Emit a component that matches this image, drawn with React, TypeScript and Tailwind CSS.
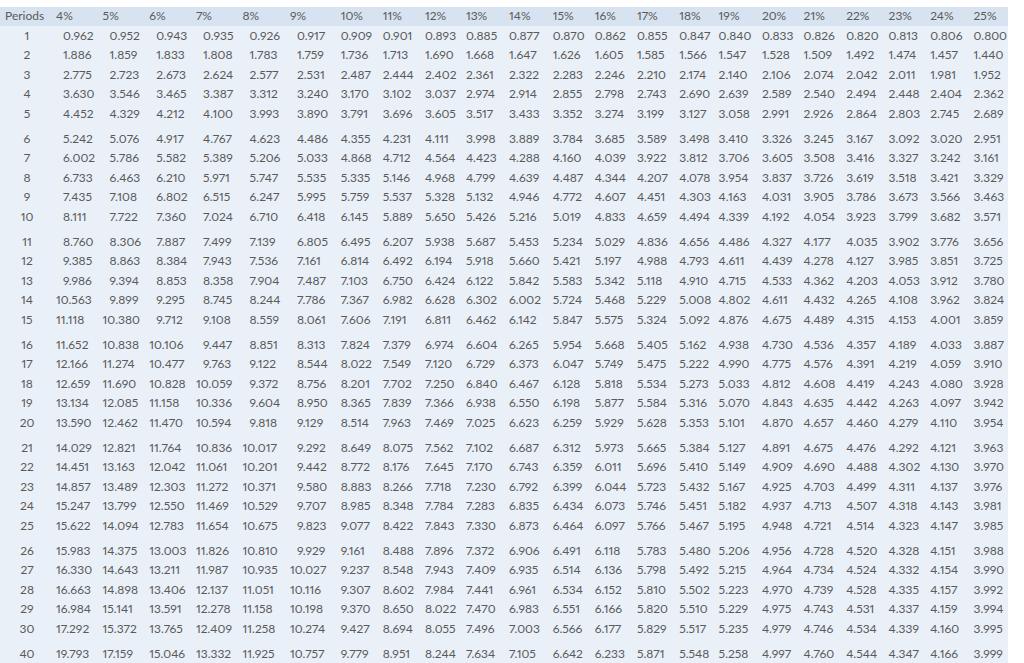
import React from 'react'

// present value of an ordinary annuity, 3 decimals
const rates = Array.from({ length: 22 }, (_, i) => i + 4)
const groups = [
  [1, 2, 3, 4, 5],
  [6, 7, 8, 9, 10],
  [11, 12, 13, 14, 15],
  [16, 17, 18, 19, 20],
  [21, 22, 23, 24, 25],
  [26, 27, 28, 29, 30],
  [40],
]

const pva = (rate: number, n: number) => {
  const r = rate / 100
  return ((1 - Math.pow(1 + r, -n)) / r).toFixed(3)
}

const rowGrid =
  'grid grid-cols-[56px_46.6px_46.7px_46.7px_46.6px_47.4px_50.7px_42px_42.3px_41px_43px_43.7px_42px_42.3px_42.3px_39.4px_43.3px_41.7px_42.6px_42.4px_41.6px_43.4px_1fr] h-[19.5px] items-center'

const Cell = ({ rate, n }: { rate: number; n: number }) => {
  const v = pva(rate, n)
  // columns up to 9% hold two-digit values, single-digit ones sit one figure in
  const shift = rate <= 9 && v.length === 5
  return <div className={shift ? 'pl-[7px] whitespace-nowrap' : 'whitespace-nowrap'}>{v}</div>
}

const App = () => {
  return (
    <div className="w-[1024px] h-[663px] bg-white pt-[6.5px] font-['Lato','Liberation_Sans',sans-serif] text-[12px] leading-none text-[#5a5a5a] proportional-nums">
      <div className="w-[1008px] bg-[#e9f0f8] pb-[1px]">
        <div className={rowGrid + ' bg-[#d8e3f1]'}>
          <div className="pl-[5px]">Periods</div>
          {rates.map((r) => (
            <div key={r}>{r}%</div>
          ))}
        </div>
        {groups.map((g, gi) => (
          <div key={gi} className={gi === 0 ? '' : 'mt-[5.5px]'}>
            {g.map((n) => (
              <div key={n} className={rowGrid}>
                <div className="text-center pr-[2px]">{n}</div>
                {rates.map((r) => (
                  <Cell key={r} rate={r} n={n} />
                ))}
              </div>
            ))}
          </div>
        ))}
      </div>
    </div>
  )
}

export default App
